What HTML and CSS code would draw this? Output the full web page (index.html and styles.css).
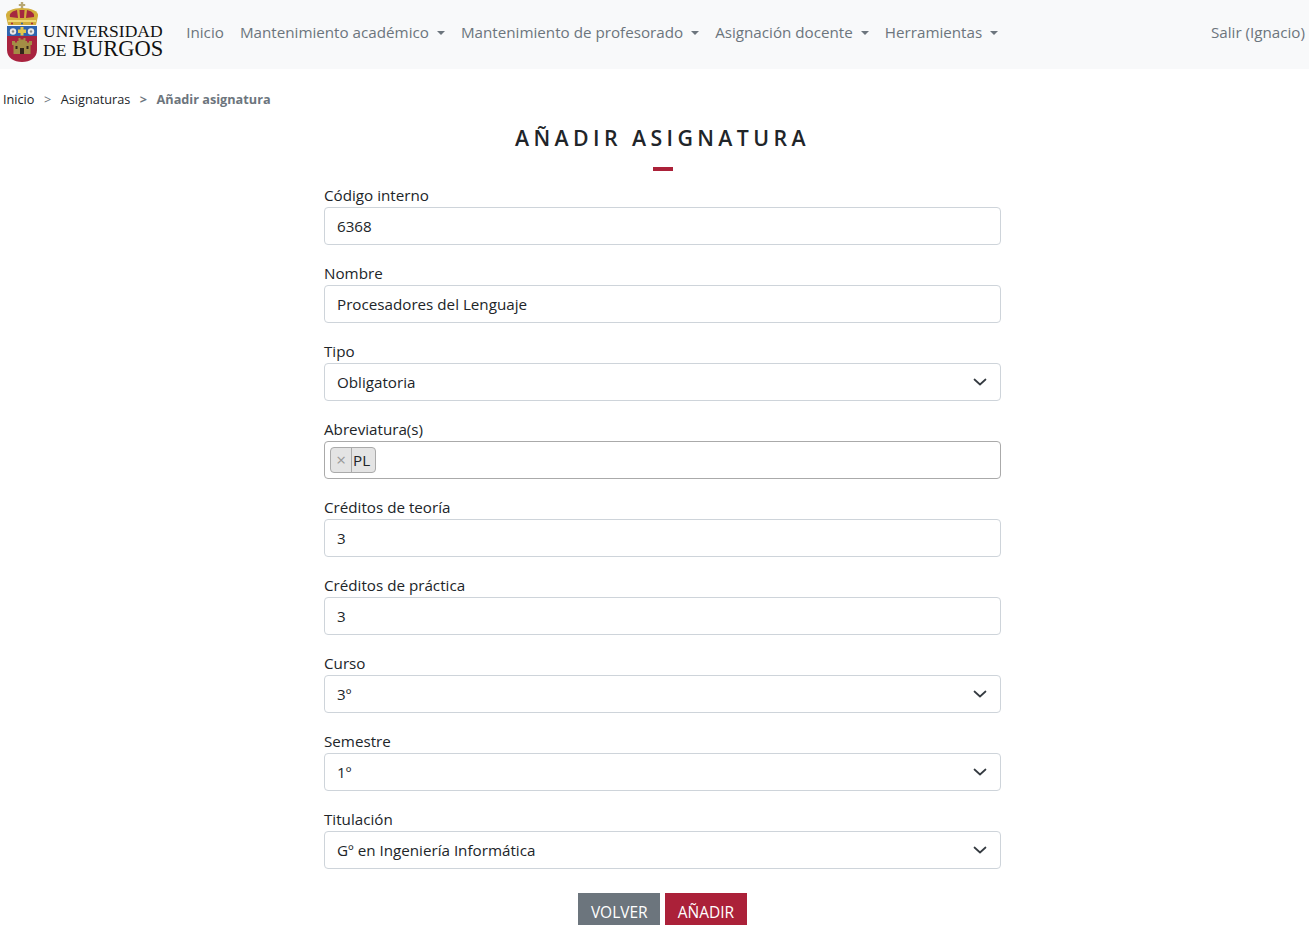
FILE: index.html
```html
<!DOCTYPE html>
<html lang="es">
<head>
    <meta charset="UTF-8">
    <meta name="viewport" content="width=device-width, initial-scale=1.0">
    <title>Añadir asignatura</title>
    <link rel="stylesheet" href="styles.css">
</head>
<body>
    <nav class="navbar">
        <a class="brand" href="#">
            <svg class="crest" viewBox="0 0 34 60" width="34" height="60">
                <!-- cross and crown -->
                <path d="M15.800 0h2.400v2h2v2h-2v3h-2.400V4h-2V2h2z" fill="#b7a774"/>
                <path d="M1 14C0 9 8 6 17 6s17 3 16 8l-2 9H3z" fill="#d2ae3c"/>
                <path d="M5 15C4 11 8 9 12 8l1 8zM14.500 8h5l-.5 8h-4zM22 8c4 1 8 3 7 7l-8 1z" fill="#a5283f"/>
                <path d="M3 18h28v2H3z" fill="#f0d878"/>
                <circle cx="7" cy="21.500" r="1" fill="#a5283f"/>
                <circle cx="17" cy="21.500" r="1" fill="#2c5fa8"/>
                <circle cx="27" cy="21.500" r="1" fill="#a5283f"/>
                <!-- shield -->
                <path d="M2 24h30v10H2z" fill="#2f63ad"/>
                <circle cx="8" cy="29.500" r="3.200" fill="#e8e8e8"/>
                <circle cx="8" cy="29.500" r="1.200" fill="#8a8a8a"/>
                <circle cx="26" cy="29.500" r="3.200" fill="#e8e8e8"/>
                <circle cx="26" cy="29.500" r="1.200" fill="#8a8a8a"/>
                <path d="M15.500 25h3v2.500H21v3.500h-2.500v2.500h-3V31H13v-3.500h2.500z" fill="#e2c64c"/>
                <path d="M2 34h30v14c0 8-7 12-15 12S2 56 2 48z" fill="#a8233f"/>
                <!-- castle -->
                <path d="M8.500 52V43H7v-4h3v1.500h2V39h1.500v-3h2v1.500h3V36h2v3H22v1.500h2V39h3v4h-1.500v9z" fill="#a38d45"/>
                <path d="M15 52v-6h4v6z" fill="#33261a"/>
                <path d="M10.500 44h2v3h-2zM21.500 44h2v3h-2z" fill="#33261a"/>
            </svg>
            <span class="brand-text">
                <span class="brand-top">UNIVERSIDAD</span>
                <span class="brand-bottom"><small>DE</small> BURGOS</span>
            </span>
        </a>
        <ul class="nav-links">
            <li><a href="#">Inicio</a></li>
            <li><a class="dropdown" href="#">Mantenimiento académico</a></li>
            <li><a class="dropdown" href="#">Mantenimiento de profesorado</a></li>
            <li><a class="dropdown" href="#">Asignación docente</a></li>
            <li><a class="dropdown" href="#">Herramientas</a></li>
        </ul>
        <a class="logout" href="#">Salir (Ignacio)</a>
    </nav>

    <ol class="breadcrumb">
        <li><a href="#">Inicio</a></li>
        <li><a href="#">Asignaturas</a></li>
        <li class="current">Añadir asignatura</li>
    </ol>

    <main class="content">
        <h1 class="title">AÑADIR ASIGNATURA</h1>
        <form class="form">
            <div class="field">
                <label for="codigo">Código interno</label>
                <input class="control" type="text" id="codigo" value="6368">
            </div>
            <div class="field">
                <label for="nombre">Nombre</label>
                <input class="control" type="text" id="nombre" value="Procesadores del Lenguaje">
            </div>
            <div class="field">
                <label for="tipo">Tipo</label>
                <div class="control select" id="tipo">Obligatoria
                    <svg class="chevron" viewBox="0 0 16 16" width="16" height="16"><path d="M2.500 5.500L8 10.500l5.500-5" fill="none" stroke="#343a40" stroke-width="1.700" stroke-linecap="round" stroke-linejoin="round"/></svg>
                </div>
            </div>
            <div class="field">
                <label>Abreviatura(s)</label>
                <div class="control tags">
                    <span class="tag"><span class="tag-remove">×</span><span class="tag-text">PL</span></span>
                </div>
            </div>
            <div class="field">
                <label for="teoria">Créditos de teoría</label>
                <input class="control" type="text" id="teoria" value="3">
            </div>
            <div class="field">
                <label for="practica">Créditos de práctica</label>
                <input class="control" type="text" id="practica" value="3">
            </div>
            <div class="field">
                <label for="curso">Curso</label>
                <div class="control select" id="curso">3º
                    <svg class="chevron" viewBox="0 0 16 16" width="16" height="16"><path d="M2.500 5.500L8 10.500l5.500-5" fill="none" stroke="#343a40" stroke-width="1.700" stroke-linecap="round" stroke-linejoin="round"/></svg>
                </div>
            </div>
            <div class="field">
                <label for="semestre">Semestre</label>
                <div class="control select" id="semestre">1º
                    <svg class="chevron" viewBox="0 0 16 16" width="16" height="16"><path d="M2.500 5.500L8 10.500l5.500-5" fill="none" stroke="#343a40" stroke-width="1.700" stroke-linecap="round" stroke-linejoin="round"/></svg>
                </div>
            </div>
            <div class="field">
                <label for="titulacion">Titulación</label>
                <div class="control select" id="titulacion">Gº en Ingeniería Informática
                    <svg class="chevron" viewBox="0 0 16 16" width="16" height="16"><path d="M2.500 5.500L8 10.500l5.500-5" fill="none" stroke="#343a40" stroke-width="1.700" stroke-linecap="round" stroke-linejoin="round"/></svg>
                </div>
            </div>
            <div class="actions">
                <a class="btn btn-back" href="#">VOLVER</a>
                <button class="btn btn-add" type="button">AÑADIR</button>
            </div>
        </form>
    </main>
</body>
</html>
```

FILE: styles.css
```css
html {
    overflow: hidden;
}

body {
    margin: 0;
    font-family: 'Open Sans', sans-serif;
    font-size: 15.2px;
    line-height: 24px;
    color: #212529;
    background-color: #fff;
}

a {
    text-decoration: none;
}

.navbar {
    display: flex;
    align-items: center;
    box-sizing: border-box;
    height: 69px;
    padding: 0 4px 5px 5px;
    background-color: #f8f9fa;
}

.brand {
    display: flex;
    align-items: center;
    gap: 4px;
    color: #111;
}

.brand-text {
    display: flex;
    flex-direction: column;
    margin-top: 18px;
    font-family: 'Liberation Serif', serif;
    line-height: 1;
}

.brand-top {
    font-size: 17.5px;
    line-height: 16px;
}

.brand-bottom {
    font-size: 22.5px;
    line-height: 19px;
}

.brand-bottom small {
    font-size: 17.5px;
}

.nav-links {
    display: flex;
    list-style: none;
    margin: 0 0 0 15px;
    padding: 0;
}

.nav-links a,
.logout {
    display: block;
    padding: 8px;
    color: #6c757d;
    font-size: 15.2px;
}

.dropdown::after {
    content: "";
    display: inline-block;
    margin-left: 8px;
    vertical-align: 3px;
    border-top: 4.8px solid;
    border-left: 4.8px solid transparent;
    border-right: 4.8px solid transparent;
}

.logout {
    margin-left: auto;
    padding: 8px 0;
}

.breadcrumb {
    display: flex;
    list-style: none;
    margin: 18px 0 0;
    padding: 0 0 0 3px;
    font-size: 12.7px;
    color: #212529;
}

.breadcrumb a {
    color: #212529;
}

.breadcrumb li + li::before {
    content: ">";
    padding: 0 9.5px;
    color: #6c757d;
}

.current {
    font-weight: 700;
    color: #6c757d;
}

.content {
    width: 677px;
    margin-left: 324px;
}

.title {
    position: relative;
    margin: 12px 0 0;
    padding-bottom: 19px;
    text-align: center;
    font-size: 21.3px;
    line-height: 29px;
    font-weight: 600;
    letter-spacing: 4.4px;
    color: #212529;
}

.title::after {
    content: "";
    position: absolute;
    left: 329px;
    bottom: 0;
    width: 20px;
    height: 4px;
    background-color: #ab2139;
}

.form {
    margin-top: 12px;
}

.field {
    margin-bottom: 16px;
}

.field label {
    display: block;
}

.control {
    display: flex;
    align-items: center;
    box-sizing: border-box;
    width: 100%;
    height: 38px;
    padding: 6px 12px;
    border: 1px solid #ced4da;
    border-radius: 4px;
    background-color: #fff;
    font-family: inherit;
    font-size: 15.2px;
    line-height: 24px;
    color: #212529;
}

.select {
    position: relative;
}

.chevron {
    position: absolute;
    right: 12px;
    top: 10px;
}

.tags {
    padding: 5px;
    border-color: #aaa;
}

.tag {
    display: flex;
    height: 26px;
    box-sizing: border-box;
    border: 1px solid #aaa;
    border-radius: 4px;
    background-color: #e4e4e4;
    line-height: 24px;
}

.tag-remove {
    width: 20px;
    text-align: center;
    border-right: 1px solid #aaa;
    color: #999;
    font-size: 17px;
}

.tag-text {
    padding: 0 5px 0 1px;
}

.actions {
    display: flex;
    justify-content: center;
    gap: 5px;
    margin-top: 24px;
}

.btn {
    box-sizing: border-box;
    height: 38px;
    padding: 7px 12.5px;
    border: 0;
    font-family: inherit;
    font-size: 15.5px;
    line-height: 24px;
    color: #fff;
}

.btn-back {
    background-color: #6c757d;
}

.btn-add {
    background-color: #ab2139;
}
```
